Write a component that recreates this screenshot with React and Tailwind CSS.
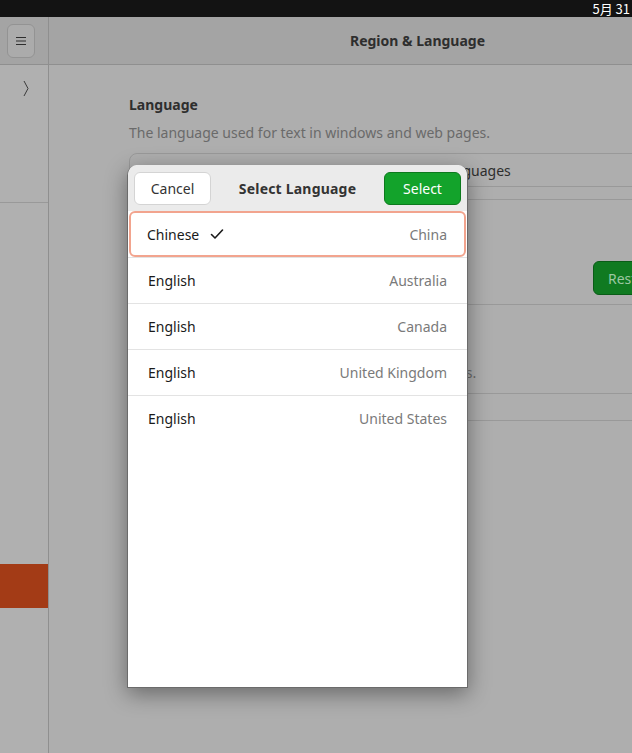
import React from 'react';

const font = { fontFamily: '"Noto Sans", "Noto Sans CJK SC", sans-serif' };

const rows = [
  { lang: 'Chinese', region: 'China', selected: true },
  { lang: 'English', region: 'Australia' },
  { lang: 'English', region: 'Canada' },
  { lang: 'English', region: 'United Kingdom' },
  { lang: 'English', region: 'United States' },
];

function Check() {
  return (
    <svg width="16" height="16" viewBox="0 0 16 16" className="ml-[10px]">
      <path d="M2.5 8.5 L6 12 L13.5 4" fill="none" stroke="#1a1a1a" strokeWidth="1.6" strokeLinecap="round" strokeLinejoin="round" />
    </svg>
  );
}

function LanguageDialog() {
  return (
    <div className="absolute left-[127px] top-[165px] w-[341px] h-[523px] bg-white rounded-t-[10px] border border-[#6b6b6b] border-t-0 shadow-[0_6px_22px_rgba(0,0,0,0.4)] flex flex-col overflow-hidden">
      {/* header */}
      <div className="h-[46px] bg-[#ebebeb] flex items-center justify-between px-[6px] shrink-0">
        <button className="w-[77px] h-[33px] bg-white border border-[#d4d4d4] rounded-[6px] text-[14px] text-[#333]">Cancel</button>
        <span className="text-[14px] font-bold text-[#333] tracking-[0.2px]">Select Language</span>
        <button className="w-[77px] h-[33px] bg-[#13a32b] border border-[#0d7a1e] rounded-[6px] text-[14px] text-white">Select</button>
      </div>
      {/* list */}
      <div className="flex flex-col">
        {rows.map((r, i) => (
          <div
            key={i}
            className={
              r.selected
                ? 'h-[46px] mx-[1px] border-2 border-[#f2a48e] rounded-[6px] flex items-center justify-between pl-[16px] pr-[17px]'
                : 'h-[46px] border-t border-[#e3e3e3] first:border-t-0 flex items-center justify-between pl-[20px] pr-[20px]'
            }
          >
            <div className="flex items-center text-[14px] text-[#1a1a1a]">
              {r.lang}
              {r.selected && <Check />}
            </div>
            <span className="text-[14px] text-[#7a7a7a]">{r.region}</span>
          </div>
        ))}
      </div>
    </div>
  );
}

export default function App() {
  return (
    <div className="relative w-[632px] h-[753px] overflow-hidden bg-[#aeaeae]" style={font}>
      {/* top panel */}
      <div className="h-[17px] bg-[#131313] flex items-center justify-end pr-[2px]">
        <span className="text-[13px] text-white leading-none" style={{ fontFamily: '"Noto Sans CJK SC", "Noto Sans", sans-serif' }}>5月 31</span>
      </div>

      <div className="flex h-[736px]">
        {/* sidebar */}
        <div className="w-[49px] shrink-0 flex flex-col border-r border-[#8f8f8f] bg-[#b0b0b0]">
          <div className="h-[48px] bg-[#a4a4a4] border-b border-[#8f8f8f] flex items-center pl-[7px]">
            <div className="w-[28px] h-[34px] rounded-[6px] bg-[#ababab] border border-[#939393] flex items-center justify-center">
              <svg width="12" height="10" viewBox="0 0 12 10">
                <path d="M1 1.5h10M1 5h10M1 8.5h10" stroke="#2e2e2e" strokeWidth="1" />
              </svg>
            </div>
          </div>
          <div className="h-[138px] border-b border-[#999] flex justify-end pr-[19px] pt-[15px]">
            <svg width="6" height="17" viewBox="0 0 6 17">
              <path d="M1 1 L5 8.5 L1 16" fill="none" stroke="#3a3a3a" strokeWidth="1" />
            </svg>
          </div>
          <div className="h-[361px]" />
          <div className="h-[44px] bg-[#a33b16]" />
        </div>

        {/* main */}
        <div className="flex-1 flex flex-col min-w-0">
          <div className="h-[48px] bg-[#a4a4a4] border-b border-[#8f8f8f] flex items-center justify-center shrink-0">
            <span className="text-[14px] font-bold text-[#2e2e2e] ml-[154px]">Region &amp; Language</span>
          </div>
          <div className="pl-[80px] pt-[30px] flex flex-col">
            <div className="text-[14px] font-bold text-[#2e2e2e] leading-[20px]">Language</div>
            <div className="mt-[8px] text-[14px] text-[#6a6a6a] leading-[20px] whitespace-nowrap">The language used for text in windows and web pages.</div>
            <div className="mt-[10px] w-[560px] h-[34px] border border-[#999] rounded-l-[8px] flex items-center pl-[191px] text-[14px] text-[#2e2e2e] whitespace-nowrap">
              Manage Installed Languages
            </div>
            <div className="mt-[12px] w-[560px] h-[106px] border-y border-[#999] rounded-l-[8px] flex items-end pl-[464px] pb-[9px]">
              <div className="h-[34px] px-[14px] rounded-[6px] bg-[#107a21] border border-[#0a5c17] flex items-center text-[14px] text-[#9cc7a2]">Restart</div>
            </div>
            <div className="mt-[58px] text-[14px] text-[#6a6a6a] leading-[20px] whitespace-nowrap pl-[135px]">Formats for dates and numbers.</div>
            <div className="mt-[10px] w-[560px] h-[28px] border-y border-[#999] rounded-l-[8px]" />
          </div>
        </div>
      </div>

      <LanguageDialog />
    </div>
  );
}
